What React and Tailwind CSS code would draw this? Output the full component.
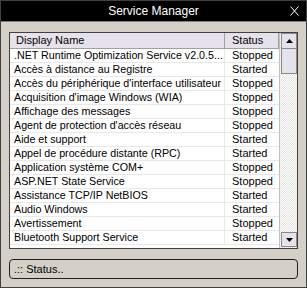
const ROWS = [
  [".NET Runtime Optimization Service v2.0.5...", "Stopped"],
  ["Accès à distance au Registre", "Started"],
  ["Accès du périphérique d'interface utilisateur", "Stopped"],
  ["Acquisition d'image Windows (WIA)", "Stopped"],
  ["Affichage des messages", "Stopped"],
  ["Agent de protection d'accès réseau", "Stopped"],
  ["Aide et support", "Started"],
  ["Appel de procédure distante (RPC)", "Started"],
  ["Application système COM+", "Stopped"],
  ["ASP.NET State Service", "Stopped"],
  ["Assistance TCP/IP NetBIOS", "Started"],
  ["Audio Windows", "Started"],
  ["Avertissement", "Stopped"],
  ["Bluetooth Support Service", "Started"],
];

export default function App() {
  return (
    <div className="w-[307px] h-[288px] bg-[#d4d0c8] border border-[#404040] flex flex-col font-['Liberation_Sans',Arial,sans-serif] text-[11px] text-black">
      {/* Title bar */}
      <div className="h-[21px] bg-black text-white relative flex items-center justify-center text-[12px] border-b border-[#808080]">
        Service Manager
        <svg className="absolute right-[7px] top-[5px]" width="9" height="10" viewBox="0 0 9 10">
          <path d="M0.5 0.5 L8.5 9.5 M8.5 0.5 L0.5 9.5" stroke="#fff" strokeWidth="1" fill="none" />
        </svg>
      </div>

      {/* List box */}
      <div className="mx-[8px] mt-[10px] h-[217px] bg-white border border-[#404040] flex">
        <div className="flex-1 flex flex-col overflow-hidden">
          <div className="h-[16px] shrink-0 flex bg-[#e6e2ec] border-b border-[#a0a0a0]">
            <div className="w-[215px] pl-[6px] border-r border-[#a0a0a0] leading-[15px]">Display Name</div>
            <div className="flex-1 pl-[7px] border-r border-[#a0a0a0] leading-[15px]">Status</div>
          </div>
          {ROWS.map(([name, status], i) => (
            <div key={i} className="h-[14px] shrink-0 flex border-b border-[#e8e8e8]">
              <div className="w-[215px] pl-[4px] border-r border-[#e8e8e8] leading-[13px] whitespace-nowrap overflow-hidden text-[10.7px]">{name}</div>
              <div className="flex-1 pl-[7px] leading-[13px]">{status}</div>
            </div>
          ))}
        </div>

        {/* Scrollbar */}
        <div className="w-[18px] shrink-0 flex flex-col border-l border-[#c0c0c0] bg-[repeating-conic-gradient(#ffffff_0_25%,#e4e2de_0_50%)] bg-[length:2px_2px]">
          <div className="h-[16px] ml-[1px] bg-[#e6e2ec] border border-[#8a8a8a] flex items-center justify-center">
            <svg width="7" height="4" viewBox="0 0 7 4"><path d="M3.5 0 L7 4 L0 4 Z" fill="#000" /></svg>
          </div>
          <div className="h-[25px] ml-[1px] bg-[#e6e2ec] border border-[#8a8a8a] border-t-0" />
          <div className="flex-1" />
          <div className="h-[15px] ml-[1px] mb-[1px] bg-[#e6e2ec] border border-[#8a8a8a] flex items-center justify-center">
            <svg width="7" height="4" viewBox="0 0 7 4"><path d="M0 0 L7 0 L3.5 4 Z" fill="#000" /></svg>
          </div>
        </div>
      </div>

      {/* Status box */}
      <div className="mx-[8px] mt-[10px] h-[20px] border border-[#202020] rounded-[4px] pl-[4px] flex items-center">
        .:: Status..
      </div>
    </div>
  );
}
